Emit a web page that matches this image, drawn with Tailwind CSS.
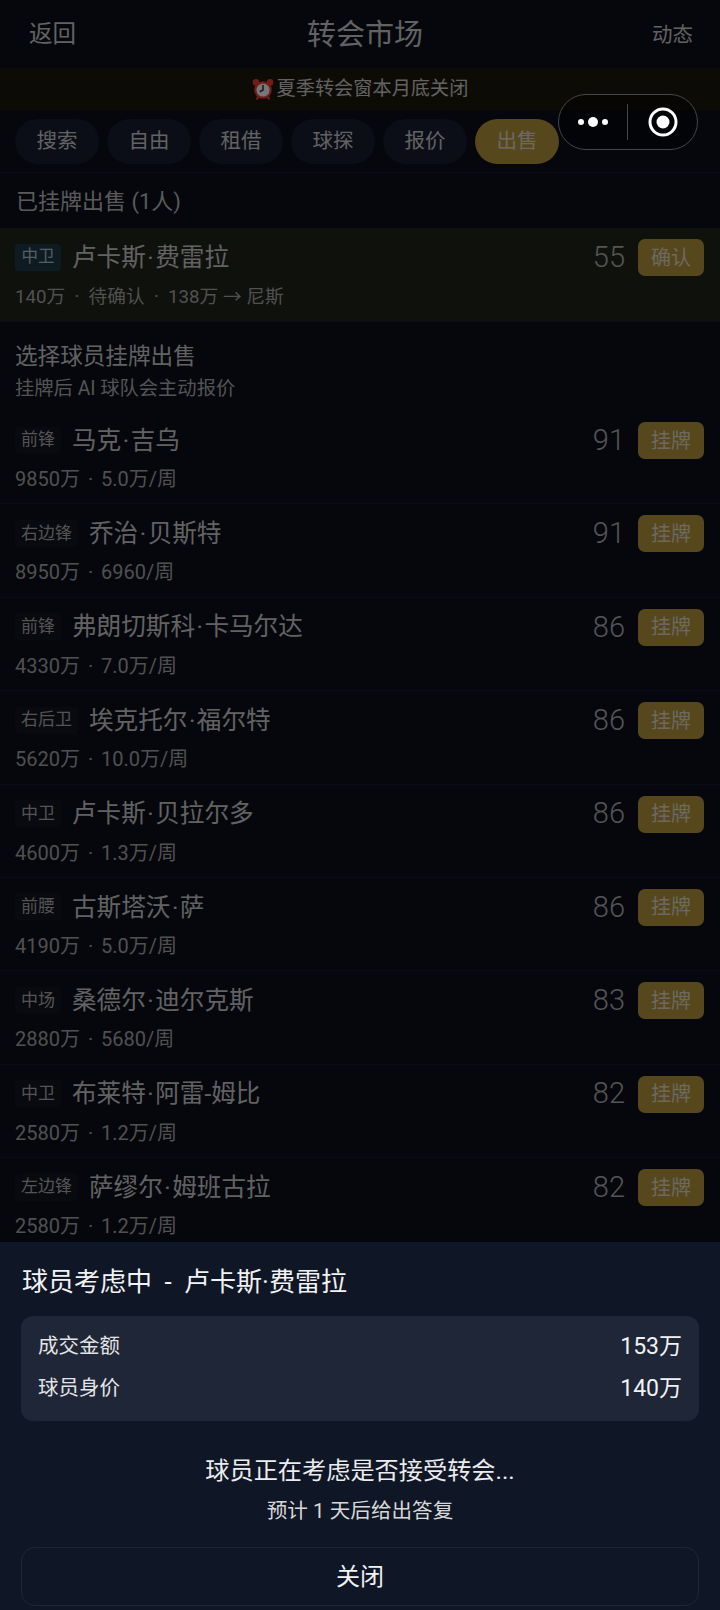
<!DOCTYPE html>
<html lang="zh-CN">
<head>
<meta charset="utf-8">
<script src="https://cdn.jsdelivr.net/npm/@tailwindcss/browser@4"></script>
</head>
<body class="m-0 bg-[#0a0e1a]">
<div class="relative w-[720px] h-[1610px] overflow-hidden bg-[#0a0e1a] text-[#d8d8d8] font-['Roboto','Noto_Sans_CJK_SC',sans-serif]">
  <header class="h-[68px] flex items-center justify-between pl-[29px] pr-[27px] pt-[2px] relative">
    <span class="text-[23.5px] text-[#c4c4c4]">返回</span>
    <span class="absolute left-[307px] top-[14px] text-[29px] leading-[42px] text-[#c4c4c4]">转会市场</span>
    <span class="text-[20.5px] text-[#c4c4c4]">动态</span>
  </header>
  <div class="h-[42px] bg-[#1b170b] flex items-center justify-center gap-[3px] text-[19.2px] text-[#c4c4c4]">
    <svg width="22" height="23" viewBox="0 0 20 21"><circle cx="3.6" cy="4" r="3" fill="#e53935"/><circle cx="16.4" cy="4" r="3" fill="#e53935"/><path d="M4 19.5l2-2.5M16 19.5l-2-2.5" stroke="#e53935" stroke-width="2"/><circle cx="10" cy="11" r="8" fill="#e53935"/><circle cx="10" cy="11" r="6" fill="#eeeeee"/><path d="M10 6.5V11l-3 1.5" stroke="#333" stroke-width="1.4" fill="none"/></svg>
    <span>夏季转会窗本月底关闭</span>
  </div>
  <nav class="h-[63px] pt-[9px] pl-[15px] flex gap-[8px] border-b border-[#161b29] items-start">
    <span class="w-[84px] h-[45px] rounded-full bg-[#161c2e] text-[20.5px] text-[#c4c4c4] flex items-center justify-center">搜索</span>
    <span class="w-[84px] h-[45px] rounded-full bg-[#161c2e] text-[20.5px] text-[#c4c4c4] flex items-center justify-center">自由</span>
    <span class="w-[84px] h-[45px] rounded-full bg-[#161c2e] text-[20.5px] text-[#c4c4c4] flex items-center justify-center">租借</span>
    <span class="w-[84px] h-[45px] rounded-full bg-[#161c2e] text-[20.5px] text-[#c4c4c4] flex items-center justify-center">球探</span>
    <span class="w-[84px] h-[45px] rounded-full bg-[#161c2e] text-[20.5px] text-[#c4c4c4] flex items-center justify-center">报价</span>
    <span class="w-[84px] h-[45px] rounded-full bg-[#ac8f38] text-[20.5px] text-[#d8d4c0] flex items-center justify-center">出售</span>
  </nav>
  <h2 class="h-[55px] pl-[16px] pt-[12px] text-[22px] leading-[34px] font-normal text-[#b4b4b4]">已挂牌出售 (1人)</h2>

  <div class="h-[94px] bg-[#1e2218] pl-[15px] pr-[16px] flex items-start justify-between border-b border-[#161b29]">
    <div>
      <div class="flex items-center h-[36px] mt-[11px] gap-[11px]"><span class="w-[46px] h-[27px] rounded-[4px] bg-[#1d3844] text-[#a0c0c8] text-[16.5px] flex items-center justify-center">中卫</span><span class="mt-[2px] text-[24.6px] text-[#c4c4c4]">卢卡斯<span class="mx-[1.5px]">·</span>费雷拉</span></div>
      <div class="mt-[8px] text-[18.7px] leading-[28px] text-[#a0a0a0] whitespace-pre">140万  ·  待确认  ·  138万 → 尼斯</div>
    </div>
    <div class="flex items-center h-[37px] mt-[11px] gap-[13px]"><span class="text-[29px] font-light text-[#a8a8a8]">55</span><span class="w-[66px] h-[37px] rounded-[7px] bg-[#ac8f38] text-[20px] text-[#d8d4c0] flex items-center justify-center">确认</span></div>
  </div>

  <div class="h-[89px] pl-[15px] pt-[18px]">
    <p class="text-[22.6px] leading-[33px] text-[#c4c4c4]">选择球员挂牌出售</p>
    <p class="text-[19.3px] leading-[32px] text-[#a8a8a8]">挂牌后 AI 球队会主动报价</p>
  </div>

  <div class="h-[93.4px] pl-[15px] pr-[16px] flex items-start justify-between border-b border-[#161b29]"><div><div class="flex items-center h-[36px] mt-[11px] gap-[11px]"><span class="px-[6px] h-[27px] rounded-[4px] bg-[#10141f] text-[#a8a8a8] text-[17px] flex items-center justify-center">前锋</span><span class="mt-[2px] text-[24.6px] text-[#c4c4c4]">马克<span class="mx-[1.5px]">·</span>吉乌</span></div><div class="mt-[7px] text-[20px] leading-[28px] [word-spacing:-1px] text-[#a0a0a0] whitespace-pre">9850万  ·  5.0万/周</div></div><div class="flex items-center h-[37px] mt-[11px] gap-[13px]"><span class="text-[29px] font-light text-[#a8a8a8]">91</span><span class="w-[66px] h-[37px] rounded-[7px] bg-[#ac8f38] text-[20px] text-[#d8d4c0] flex items-center justify-center">挂牌</span></div></div>
  <div class="h-[93.4px] pl-[15px] pr-[16px] flex items-start justify-between border-b border-[#161b29]"><div><div class="flex items-center h-[36px] mt-[11px] gap-[11px]"><span class="px-[6px] h-[27px] rounded-[4px] bg-[#10141f] text-[#a8a8a8] text-[17px] flex items-center justify-center">右边锋</span><span class="mt-[2px] text-[24.6px] text-[#c4c4c4]">乔治<span class="mx-[1.5px]">·</span>贝斯特</span></div><div class="mt-[7px] text-[20px] leading-[28px] [word-spacing:-1px] text-[#a0a0a0] whitespace-pre">8950万  ·  6960/周</div></div><div class="flex items-center h-[37px] mt-[11px] gap-[13px]"><span class="text-[29px] font-light text-[#a8a8a8]">91</span><span class="w-[66px] h-[37px] rounded-[7px] bg-[#ac8f38] text-[20px] text-[#d8d4c0] flex items-center justify-center">挂牌</span></div></div>
  <div class="h-[93.4px] pl-[15px] pr-[16px] flex items-start justify-between border-b border-[#161b29]"><div><div class="flex items-center h-[36px] mt-[11px] gap-[11px]"><span class="px-[6px] h-[27px] rounded-[4px] bg-[#10141f] text-[#a8a8a8] text-[17px] flex items-center justify-center">前锋</span><span class="mt-[2px] text-[24.6px] text-[#c4c4c4]">弗朗切斯科<span class="mx-[1.5px]">·</span>卡马尔达</span></div><div class="mt-[7px] text-[20px] leading-[28px] [word-spacing:-1px] text-[#a0a0a0] whitespace-pre">4330万  ·  7.0万/周</div></div><div class="flex items-center h-[37px] mt-[11px] gap-[13px]"><span class="text-[29px] font-light text-[#a8a8a8]">86</span><span class="w-[66px] h-[37px] rounded-[7px] bg-[#ac8f38] text-[20px] text-[#d8d4c0] flex items-center justify-center">挂牌</span></div></div>
  <div class="h-[93.4px] pl-[15px] pr-[16px] flex items-start justify-between border-b border-[#161b29]"><div><div class="flex items-center h-[36px] mt-[11px] gap-[11px]"><span class="px-[6px] h-[27px] rounded-[4px] bg-[#10141f] text-[#a8a8a8] text-[17px] flex items-center justify-center">右后卫</span><span class="mt-[2px] text-[24.6px] text-[#c4c4c4]">埃克托尔<span class="mx-[1.5px]">·</span>福尔特</span></div><div class="mt-[7px] text-[20px] leading-[28px] [word-spacing:-1px] text-[#a0a0a0] whitespace-pre">5620万  ·  10.0万/周</div></div><div class="flex items-center h-[37px] mt-[11px] gap-[13px]"><span class="text-[29px] font-light text-[#a8a8a8]">86</span><span class="w-[66px] h-[37px] rounded-[7px] bg-[#ac8f38] text-[20px] text-[#d8d4c0] flex items-center justify-center">挂牌</span></div></div>
  <div class="h-[93.4px] pl-[15px] pr-[16px] flex items-start justify-between border-b border-[#161b29]"><div><div class="flex items-center h-[36px] mt-[11px] gap-[11px]"><span class="px-[6px] h-[27px] rounded-[4px] bg-[#10141f] text-[#a8a8a8] text-[17px] flex items-center justify-center">中卫</span><span class="mt-[2px] text-[24.6px] text-[#c4c4c4]">卢卡斯<span class="mx-[1.5px]">·</span>贝拉尔多</span></div><div class="mt-[7px] text-[20px] leading-[28px] [word-spacing:-1px] text-[#a0a0a0] whitespace-pre">4600万  ·  1.3万/周</div></div><div class="flex items-center h-[37px] mt-[11px] gap-[13px]"><span class="text-[29px] font-light text-[#a8a8a8]">86</span><span class="w-[66px] h-[37px] rounded-[7px] bg-[#ac8f38] text-[20px] text-[#d8d4c0] flex items-center justify-center">挂牌</span></div></div>
  <div class="h-[93.4px] pl-[15px] pr-[16px] flex items-start justify-between border-b border-[#161b29]"><div><div class="flex items-center h-[36px] mt-[11px] gap-[11px]"><span class="px-[6px] h-[27px] rounded-[4px] bg-[#10141f] text-[#a8a8a8] text-[17px] flex items-center justify-center">前腰</span><span class="mt-[2px] text-[24.6px] text-[#c4c4c4]">古斯塔沃<span class="mx-[1.5px]">·</span>萨</span></div><div class="mt-[7px] text-[20px] leading-[28px] [word-spacing:-1px] text-[#a0a0a0] whitespace-pre">4190万  ·  5.0万/周</div></div><div class="flex items-center h-[37px] mt-[11px] gap-[13px]"><span class="text-[29px] font-light text-[#a8a8a8]">86</span><span class="w-[66px] h-[37px] rounded-[7px] bg-[#ac8f38] text-[20px] text-[#d8d4c0] flex items-center justify-center">挂牌</span></div></div>
  <div class="h-[93.4px] pl-[15px] pr-[16px] flex items-start justify-between border-b border-[#161b29]"><div><div class="flex items-center h-[36px] mt-[11px] gap-[11px]"><span class="px-[6px] h-[27px] rounded-[4px] bg-[#10141f] text-[#a8a8a8] text-[17px] flex items-center justify-center">中场</span><span class="mt-[2px] text-[24.6px] text-[#c4c4c4]">桑德尔<span class="mx-[1.5px]">·</span>迪尔克斯</span></div><div class="mt-[7px] text-[20px] leading-[28px] [word-spacing:-1px] text-[#a0a0a0] whitespace-pre">2880万  ·  5680/周</div></div><div class="flex items-center h-[37px] mt-[11px] gap-[13px]"><span class="text-[29px] font-light text-[#a8a8a8]">83</span><span class="w-[66px] h-[37px] rounded-[7px] bg-[#ac8f38] text-[20px] text-[#d8d4c0] flex items-center justify-center">挂牌</span></div></div>
  <div class="h-[93.4px] pl-[15px] pr-[16px] flex items-start justify-between border-b border-[#161b29]"><div><div class="flex items-center h-[36px] mt-[11px] gap-[11px]"><span class="px-[6px] h-[27px] rounded-[4px] bg-[#10141f] text-[#a8a8a8] text-[17px] flex items-center justify-center">中卫</span><span class="mt-[2px] text-[24.6px] text-[#c4c4c4]">布莱特<span class="mx-[1.5px]">·</span>阿雷-姆比</span></div><div class="mt-[7px] text-[20px] leading-[28px] [word-spacing:-1px] text-[#a0a0a0] whitespace-pre">2580万  ·  1.2万/周</div></div><div class="flex items-center h-[37px] mt-[11px] gap-[13px]"><span class="text-[29px] font-light text-[#a8a8a8]">82</span><span class="w-[66px] h-[37px] rounded-[7px] bg-[#ac8f38] text-[20px] text-[#d8d4c0] flex items-center justify-center">挂牌</span></div></div>
  <div class="h-[93.4px] pl-[15px] pr-[16px] flex items-start justify-between border-b border-[#161b29]"><div><div class="flex items-center h-[36px] mt-[11px] gap-[11px]"><span class="px-[6px] h-[27px] rounded-[4px] bg-[#10141f] text-[#a8a8a8] text-[17px] flex items-center justify-center">左边锋</span><span class="mt-[2px] text-[24.6px] text-[#c4c4c4]">萨缪尔<span class="mx-[1.5px]">·</span>姆班古拉</span></div><div class="mt-[7px] text-[20px] leading-[28px] [word-spacing:-1px] text-[#a0a0a0] whitespace-pre">2580万  ·  1.2万/周</div></div><div class="flex items-center h-[37px] mt-[11px] gap-[13px]"><span class="text-[29px] font-light text-[#a8a8a8]">82</span><span class="w-[66px] h-[37px] rounded-[7px] bg-[#ac8f38] text-[20px] text-[#d8d4c0] flex items-center justify-center">挂牌</span></div></div>

  <div class="absolute inset-0 bg-black/50"></div>

  <div class="absolute left-0 right-0 bottom-0 h-[368px] bg-[#0f1626] px-[21px]">
    <h3 class="pt-[22px] pl-[1px] text-[26px] leading-[37px] [word-spacing:6px] font-normal text-[#f2f2f2]">球员考虑中 - 卢卡斯·费雷拉</h3>
    <div class="mt-[15px] h-[105px] rounded-[12px] bg-[#1e2638] pl-[17px] pr-[17px] pt-[10px]">
      <div class="flex justify-between items-center h-[42px]"><span class="text-[20.5px] text-[#e4e4e4] mb-[2px]">成交金额</span><span class="text-[23px] text-[#f2f2f2]">153万</span></div>
      <div class="flex justify-between items-center h-[42px]"><span class="text-[20.5px] text-[#e4e4e4] mb-[2px]">球员身价</span><span class="text-[23px] text-[#f2f2f2]">140万</span></div>
    </div>
    <p class="mt-[32px] text-center text-[24.2px] leading-[36px] text-[#ececec]">球员正在考虑是否接受转会...</p>
    <p class="mt-[7px] text-center text-[20.6px] leading-[30px] text-[#d8d8d8]">预计 1 天后给出答复</p>
    <div class="mt-[21px] h-[59px] rounded-[14px] border border-[#1e2638] flex items-center justify-center text-[24px] text-[#f2f2f2]">关闭</div>
  </div>

  <div class="absolute left-[558px] top-[94px] w-[140px] h-[56px] rounded-full border border-[#44464c] bg-black/40 flex items-center">
    <svg class="ml-[19px]" width="32" height="12" viewBox="0 0 32 12"><circle cx="3" cy="6" r="3" fill="#fff"/><circle cx="15" cy="6" r="5" fill="#fff"/><circle cx="27" cy="6" r="3" fill="#fff"/></svg>
    <span class="ml-[17px] w-px h-[36px] bg-[#44464c]"></span>
    <svg class="ml-[20px]" width="30" height="30" viewBox="0 0 30 30"><circle cx="15" cy="15" r="13" fill="none" stroke="#fff" stroke-width="3"/><circle cx="15" cy="15" r="6.5" fill="#fff"/></svg>
  </div>
</div>
</body>
</html>
